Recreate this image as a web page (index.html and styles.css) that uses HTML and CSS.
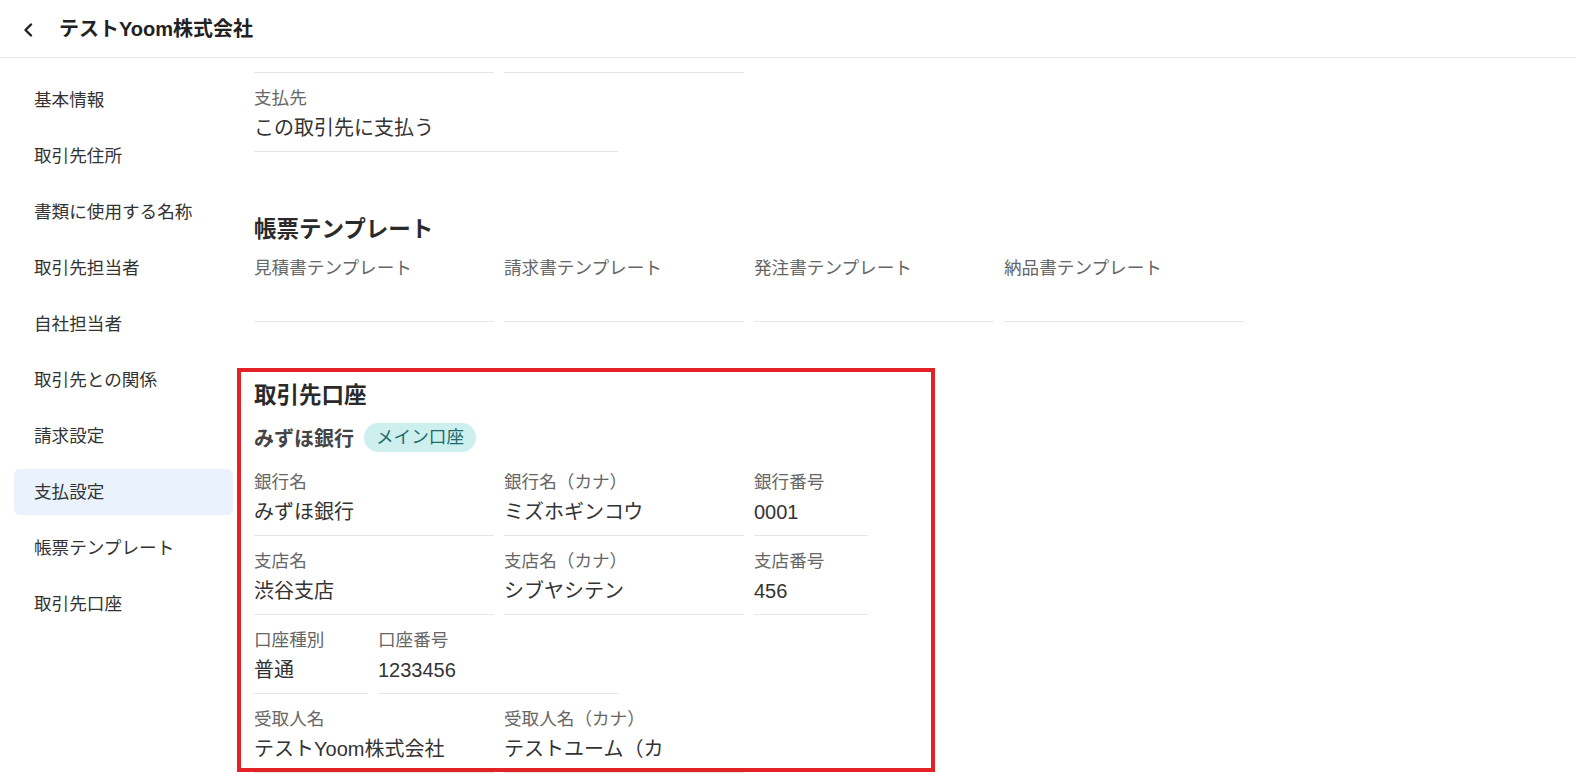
FILE: index.html
```html
<!DOCTYPE html>
<html lang="ja">
<head>
  <meta charset="UTF-8">
  <title>テストYoom株式会社</title>
  <link rel="stylesheet" href="styles.css">
</head>
<body>

  <header class="topbar">
    <button class="back-btn" aria-label="戻る">
      <svg width="12" height="14" viewBox="0 0 12 14"><path d="M9 1.5 L3.5 7 L9 12.5" fill="none" stroke="#222" stroke-width="2.4" stroke-linecap="round" stroke-linejoin="round"/></svg>
    </button>
    <h1 class="page-title">テストYoom株式会社</h1>
  </header>

  <div class="layout">
    <nav class="side-nav">
      <a class="nav-item">基本情報</a>
      <a class="nav-item">取引先住所</a>
      <a class="nav-item">書類に使用する名称</a>
      <a class="nav-item">取引先担当者</a>
      <a class="nav-item">自社担当者</a>
      <a class="nav-item">取引先との関係</a>
      <a class="nav-item">請求設定</a>
      <a class="nav-item active">支払設定</a>
      <a class="nav-item">帳票テンプレート</a>
      <a class="nav-item">取引先口座</a>
    </nav>

    <main class="content">
      <!-- 上の行（スクロールで見切れている） -->
      <div class="field-row">
        <div class="field w-full cut"></div>
        <div class="field w-full cut"></div>
      </div>

      <div class="field-row">
        <div class="field w-wide">
          <div class="field-label">支払先</div>
          <div class="field-value">この取引先に支払う</div>
        </div>
      </div>

      <section class="section">
        <h2 class="section-title">帳票テンプレート</h2>
        <div class="field-row">
          <div class="field w-full">
            <div class="field-label">見積書テンプレート</div>
            <div class="field-value"></div>
          </div>
          <div class="field w-full">
            <div class="field-label">請求書テンプレート</div>
            <div class="field-value"></div>
          </div>
          <div class="field w-full">
            <div class="field-label">発注書テンプレート</div>
            <div class="field-value"></div>
          </div>
          <div class="field w-full">
            <div class="field-label">納品書テンプレート</div>
            <div class="field-value"></div>
          </div>
        </div>
      </section>

      <section class="section bank">
        <div class="highlight"></div>
        <h2 class="section-title">取引先口座</h2>
        <div class="bank-head">
          <span class="bank-name">みずほ銀行</span>
          <span class="badge">メイン口座</span>
        </div>

        <div class="field-row">
          <div class="field w-full">
            <div class="field-label">銀行名</div>
            <div class="field-value">みずほ銀行</div>
          </div>
          <div class="field w-full">
            <div class="field-label">銀行名（カナ）</div>
            <div class="field-value">ミズホギンコウ</div>
          </div>
          <div class="field w-half">
            <div class="field-label">銀行番号</div>
            <div class="field-value">0001</div>
          </div>
        </div>

        <div class="field-row">
          <div class="field w-full">
            <div class="field-label">支店名</div>
            <div class="field-value">渋谷支店</div>
          </div>
          <div class="field w-full">
            <div class="field-label">支店名（カナ）</div>
            <div class="field-value">シブヤシテン</div>
          </div>
          <div class="field w-half">
            <div class="field-label">支店番号</div>
            <div class="field-value">456</div>
          </div>
        </div>

        <div class="field-row">
          <div class="field w-half">
            <div class="field-label">口座種別</div>
            <div class="field-value">普通</div>
          </div>
          <div class="field w-full">
            <div class="field-label">口座番号</div>
            <div class="field-value">1233456</div>
          </div>
        </div>

        <div class="field-row">
          <div class="field w-full">
            <div class="field-label">受取人名</div>
            <div class="field-value">テストYoom株式会社</div>
          </div>
          <div class="field w-full">
            <div class="field-label">受取人名（カナ）</div>
            <div class="field-value">テストユーム（カ</div>
          </div>
        </div>
      </section>
    </main>
  </div>

</body>
</html>
```

FILE: styles.css
```css
body {
  margin: 0;
  font-family: "Liberation Sans", "Noto Sans CJK JP", sans-serif;
  color: #333;
  background: #fff;
  overflow: hidden;
}

.topbar {
  height: 57px;
  display: flex;
  align-items: center;
  padding-left: 20px;
  border-bottom: 1px solid #e4e8ea;
}

.back-btn {
  border: none;
  background: none;
  padding: 0;
  width: 16px;
  height: 16px;
  margin-top: 3px;
  display: flex;
  align-items: center;
  justify-content: center;
  cursor: pointer;
}

.page-title {
  margin: 0 0 0 23px;
  font-size: 20px;
  font-weight: bold;
  color: #222;
  line-height: 26px;
}

.layout {
  display: flex;
}

.side-nav {
  width: 219px;
  padding: 19px 0 0 14px;
  display: flex;
  flex-direction: column;
  gap: 10px;
  flex-shrink: 0;
}

.nav-item {
  height: 46px;
  line-height: 46px;
  padding-left: 20px;
  font-size: 17.6px;
  color: #333;
  border-radius: 6px;
  cursor: pointer;
}

.nav-item.active {
  background: #e9f2fd;
}

.content {
  padding-left: 21px;
  flex: 1;
}

.field-row {
  display: flex;
  gap: 10px;
}

.field {
  padding: 13px 0 9px;
  border-bottom: 1px solid #e2e8ea;
}

.field.cut {
  padding: 0;
  height: 14px;
}

.w-full { width: 240px; }
.w-half { width: 114px; }
.w-wide { width: 364px; }

.field-label {
  font-size: 17.6px;
  line-height: 24px;
  color: #666;
}

.field-value {
  margin-top: 4px;
  font-size: 20px;
  line-height: 28px;
  height: 28px;
  color: #333;
  white-space: nowrap;
}

.section {
  margin-top: 65px;
}

.section-title {
  margin: 0;
  font-size: 22.5px;
  line-height: 26px;
  font-weight: bold;
  color: #2a2a2a;
}

.bank {
  position: relative;
  margin-top: 61px;
}

.bank-head {
  display: flex;
  align-items: center;
  gap: 10px;
  margin: 14px 0 5px;
}

.bank-name {
  font-size: 20px;
  font-weight: bold;
  color: #444;
}

.badge {
  height: 29px;
  line-height: 29px;
  padding: 0 12px;
  border-radius: 15px;
  background: #cdf0ef;
  color: #1f6b6b;
  font-size: 17.6px;
}

/* 赤枠の注記 */
.highlight {
  position: absolute;
  left: -17px;
  top: -15px;
  width: 698px;
  height: 404px;
  box-sizing: border-box;
  border: 4px solid #e32226;
  pointer-events: none;
}
```
